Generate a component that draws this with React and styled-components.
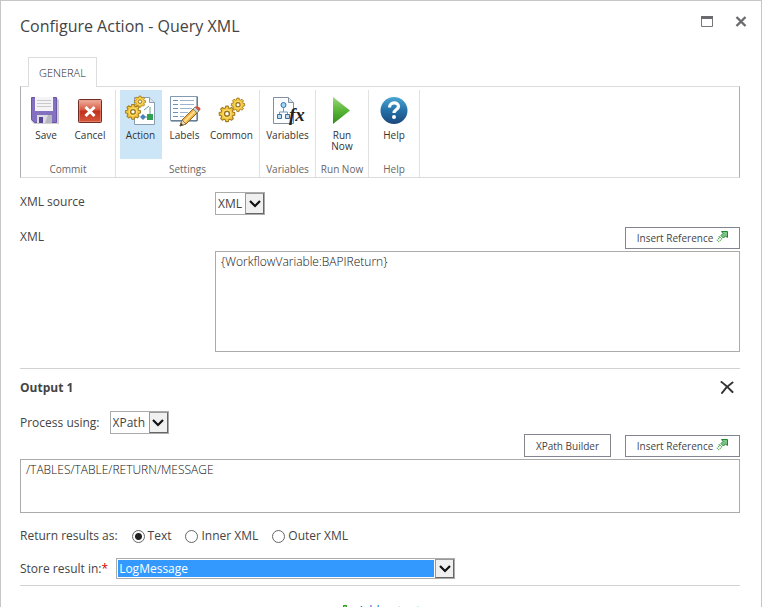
import React from 'react';
import styled, { createGlobalStyle, css } from 'styled-components';

const GlobalStyle = createGlobalStyle`
  *, *::before, *::after { box-sizing: border-box; }
  body {
    margin: 0;
    background: #fff;
    color: #444;
    font: 12px/16px "Open Sans", "Noto Sans", sans-serif;
  }
  button, select, textarea, input { font: inherit; color: inherit; margin: 0; }
`;

const Dialog = styled.main`
  height: 100vh;
  overflow: hidden;
  padding: 0 21px 0 19px;
  border: 1px solid #c6c6c6;
  border-bottom: 0;
`;

const TitleBar = styled.header`
  display: flex;
  justify-content: space-between;
  align-items: center;
  height: 40px;
  margin: 5px 0 11px;
`;

const Title = styled.h1`
  margin: 0;
  font-size: 16px;
  line-height: 24px;
  font-weight: 400;
  color: #444;
`;

const WindowControls = styled.div`
  display: flex;
  gap: 20px;
  margin: 0 -8px 8px 0;
`;

const IconButton = styled.button`
  display: flex;
  align-items: center;
  justify-content: center;
  width: 14px;
  height: 14px;
  padding: 0;
  border: 0;
  background: none;
`;

const Tabs = styled.nav`
  display: flex;
  padding-left: 8px;
`;

const Tab = styled.button`
  height: 30px;
  margin-bottom: -1px;
  padding: 0 10px;
  border: 1px solid #dcdcdc;
  border-bottom: 0;
  background: #fff;
  font-size: 11px;
  font-weight: 300;
  color: #222;
  position: relative;
`;

const Ribbon = styled.div`
  display: flex;
  height: 92px;
  padding-top: 3px;
  border: 1px solid #dcdcdc;
  border-left-color: #aaacb4;
  border-right-color: #aaacb4;
`;

const Group = styled.section`
  display: flex;
  flex-direction: column;
  justify-content: space-between;
  width: ${(p) => p.$width}px;
  border-right: 1px solid #e1e1e1;
`;

const GroupTools = styled.div`
  display: flex;
  justify-content: center;
  gap: ${(p) => p.$gap || 0}px;
`;

const GroupName = styled.span`
  text-align: center;
  font-size: 10px;
  line-height: 16px;
  color: #666;
  white-space: nowrap;
`;

const Tool = styled.button`
  display: flex;
  flex-direction: column;
  align-items: center;
  width: ${(p) => p.$width || 44}px;
  height: 69px;
  padding: 5px 0 0;
  border: 0;
  background: ${(p) => (p.$active ? '#cde6f7' : 'none')};
  font-size: 10px;
  line-height: 11px;
  color: #333;

  svg { flex: none; margin-bottom: 3px; overflow: visible; }
`;

const Form = styled.form`
  display: block;
`;

const Field = styled.div`
  display: grid;
  grid-template-columns: 195px 1fr;
  align-items: start;
  margin-top: ${(p) => p.$top}px;
`;

const Label = styled.label`
  line-height: 20px;
`;

const Star = styled.span`
  color: #c00;
`;

const Stack = styled.div`
  display: flex;
  flex-direction: column;
  gap: 2px;
`;

const Actions = styled.div`
  display: flex;
  justify-content: flex-end;
  align-items: flex-end;
  gap: 14px;
`;

const PushButton = styled.button`
  display: flex;
  align-items: center;
  justify-content: center;
  gap: 3px;
  width: ${(p) => p.$width}px;
  height: ${(p) => p.$height || 22}px;
  padding: 0;
  border: 1px solid #82858f;
  background: #fff;
  font-size: 10px;
  color: #444;

  svg { margin-bottom: 2px; }
`;

const TextBox = styled.textarea`
  display: block;
  width: 100%;
  height: ${(p) => p.$height}px;
  padding: 2px 5px;
  border: 1px solid #ababab;
  background: #fff;
  color: #111;
  font-size: 12px;
  line-height: 16px;
  font-weight: 300;
  resize: none;
  outline: 0;
`;

const SelectFrame = styled.span`
  display: grid;
  grid-template-columns: 1fr 19px;
  width: ${(p) => p.$width}px;
  max-width: 100%;
  height: ${(p) => p.$height || 23}px;
  border: 1px solid #ababab;
  background: #fff;
`;

const NativeSelect = styled.select`
  appearance: none;
  min-width: 0;
  padding: 0 2px;
  border: 0;
  border-radius: 0;
  background: transparent;
  outline: 0;
  ${(p) => p.$selected && css`
    margin: 1px;
    padding: 0 1px;
    background: #3399ff;
    color: #fff;
    option { background: #fff; color: #444; }
  `}
`;

const SelectArrow = styled.span`
  display: flex;
  align-items: center;
  justify-content: center;
  border: 1px solid #999;
  border-right-color: #666;
  border-bottom-color: #666;
  background: #f0f0f0;
  pointer-events: none;
`;

const Divider = styled.hr`
  height: 1px;
  margin: ${(p) => p.$top}px 0 0;
  border: 0;
  background: #d2d2d2;
`;

const OutputHeader = styled.div`
  display: flex;
  justify-content: space-between;
  align-items: center;
  margin-top: 9px;
  padding-right: 6px;
`;

const OutputTitle = styled.h2`
  margin: 0;
  font-size: 12px;
  line-height: 20px;
  font-weight: 700;
`;

const InlineRow = styled.div`
  display: flex;
  align-items: center;
  gap: ${(p) => p.$gap}px;
  margin-top: ${(p) => p.$top}px;
`;

const RadioSet = styled.fieldset`
  display: flex;
  align-items: center;
  gap: 14px;
  margin: 13px 0 0;
  padding: 0;
  border: 0;
`;

const Legend = styled.legend`
  float: left;
  padding: 0;
  line-height: 20px;
`;

const RadioLabel = styled.label`
  display: flex;
  align-items: center;
  gap: 3px;
  line-height: 20px;
`;

const Radio = styled.input`
  appearance: none;
  width: 13px;
  height: 13px;
  border: 1px solid #666;
  border-radius: 50%;
  background: #fff;
  &:checked { background: radial-gradient(circle, #222 0 3px, #fff 4px); }
`;

const AddLink = styled.a`
  display: flex;
  align-items: center;
  justify-content: center;
  gap: 6px;
  margin-top: 15px;
  line-height: 20px;
  color: #0072c6;
  text-decoration: none;
`;

const GEAR = 'M-1.5-8h3l.5 2.2 1.5.6L5.4-6.4l2 2-1.2 1.9.6 1.5L9-.5v3l-2.2.5-.6 1.5 1.2 1.9-2 2-1.9-1.2-1.5.6L1.5 10h-3L-2 7.8l-1.5-.6-1.9 1.2-2-2 1.2-1.9L-6.8 3-9 2.5v-3l2.2-.5.6-1.5-1.2-1.9 2-2 1.9 1.2 1.5-.6z';

function Gear({ x, y, scale }) {
  return (
    <g transform={`translate(${x} ${y}) scale(${scale})`}>
      <path d={GEAR} fill="#f5c83c" stroke="#a57d22" strokeWidth="1.3" strokeLinejoin="round" />
      <circle cy="1" r="4.6" fill="none" stroke="#ffe083" strokeWidth="1" />
      <circle cy="1" r="2.8" fill="#fff" stroke="#94701c" strokeWidth="1.5" />
    </g>
  );
}

function Icon({ children }) {
  return <svg width="32" height="32" viewBox="0 0 32 32" aria-hidden="true">{children}</svg>;
}

const SaveIcon = () => (
  <Icon>
    <path d="M1 3h26l2 2v24H4l-3-3z" fill="#bbb" opacity=".7" />
    <path d="M1.5 2.500h25v25h-22l-3-3z" fill="#8470c0" stroke="#6d55ac" />
    <path d="M5 2h18v14H5z" fill="#f4f4f6" />
    <path d="M7 5.500h14M7 8.500h14M7 11.500h14" stroke="#c9c9cc" />
    <path d="M7 20h15v8H7z" fill="#dcdce2" />
    <path d="M9 22h4v6H9z" fill="#5b4596" />
    <path d="M18 20h4v8h-7z" fill="#b7b7c2" />
  </Icon>
);

const CancelIcon = () => (
  <Icon>
    <defs>
      <linearGradient id="cancelFill" x1="0" y1="0" x2="0" y2="1">
        <stop offset="0" stopColor="#efb5a4" />
        <stop offset=".45" stopColor="#d8583f" />
        <stop offset=".5" stopColor="#bf2f1c" />
        <stop offset="1" stopColor="#d9593f" />
      </linearGradient>
    </defs>
    <rect x="4.5" y="4.500" width="23" height="23" rx="1" fill="url(#cancelFill)" stroke="#702d25" />
    <rect x="5.500" y="5.500" width="21" height="21" fill="none" stroke="#e99885" opacity=".6" />
    <path d="M11.500 12l9 9M20.500 12l-9 9" stroke="#fff" strokeWidth="3" />
  </Icon>
);

const ActionIcon = () => (
  <Icon>
    <path d="M9.500 2.500h15l5 5v22h-20z" fill="#fff" stroke="#8b9db0" />
    <path d="M24.500 2.500v5h5" fill="#dde6ee" stroke="#8b9db0" />
    <path d="M17 22h6M25 12v8M19 15l5-4" stroke="#6f9d92" fill="none" />
    <path d="M22 19h6v6h-6z" fill="#31a052" />
    <path d="M15 22l3-3 3 3-3 3z" fill="#4a84bb" />
    <Gear x={15} y={6} scale={0.62} />
    <Gear x={8} y={16} scale={0.82} />
  </Icon>
);

const LabelsIcon = () => (
  <Icon>
    <path d="M1.500 1.500h27v24h-27z" fill="#fff" stroke="#839bb2" />
    <path d="M28 2v24H2" fill="none" stroke="#476480" />
    <path d="M4 5.500h5M4 9.500h5M4 13.500h5M4 17.500h5M4 21.500h5" stroke="#6d91b6" />
    <path d="M11 5.500h14M11 9.500h14M11 13.500h12M11 17.500h8M11 21.500h4" stroke="#9bb3cc" />
    <path d="M13 25L25 13l4 4-12 12-6 2z" fill="#efb344" stroke="#94631d" />
    <path d="M15 27l12-12" stroke="#ffdf8b" strokeWidth="2" />
    <path d="M13 25l4 4-6 2z" fill="#edd6ae" stroke="#75634b" strokeWidth=".7" />
    <path d="M11 31l1-3 2 2z" fill="#333" />
    <path d="M24 14l4 4 2-2-4-4z" fill="#c9d4cf" stroke="#7e8d88" />
    <path d="M26 12l4 4c2-1 2-3 0-4s-3-1-4 0z" fill="#d25343" />
  </Icon>
);

const CommonIcon = () => (
  <Icon>
    <Gear x={22} y={9} scale={0.74} />
    <Gear x={11} y={18} scale={0.86} />
  </Icon>
);

const VariablesIcon = () => (
  <Icon>
    <path d="M1.500 2.500h15l5 5v21h-20z" fill="#fbfdff" stroke="#8291a0" />
    <path d="M16.500 2.500v5h5" fill="#dae4ec" stroke="#8291a0" />
    <path d="M11.500 13v4M7.500 19v-2h8v2" fill="none" stroke="#7599b6" />
    <circle cx="11.500" cy="10" r="2.500" fill="#a7d5f4" stroke="#2e74a8" />
    <path d="M5.500 19.500h4v4h-4zM13.500 19.500h4v4h-4z" fill="#b9dcf2" stroke="#386f9c" />
    <text x="17" y="26" fontFamily="Liberation Serif, serif" fontSize="19" fontWeight="700" fontStyle="italic" fill="#222">fx</text>
  </Icon>
);

const RunIcon = () => (
  <Icon>
    <defs>
      <linearGradient id="runFill" x1="0" y1="0" x2="0" y2="1">
        <stop stopColor="#9bd778" />
        <stop offset=".55" stopColor="#53b332" />
        <stop offset="1" stopColor="#328c20" />
      </linearGradient>
    </defs>
    <path d="M7 2l17 13.500L7 29z" fill="url(#runFill)" />
  </Icon>
);

const HelpIcon = () => (
  <Icon>
    <defs>
      <linearGradient id="helpFill" x1="0" y1="0" x2="0" y2="1">
        <stop stopColor="#4aa6d4" />
        <stop offset=".5" stopColor="#2471a8" />
        <stop offset="1" stopColor="#1c477c" />
      </linearGradient>
    </defs>
    <circle cx="16" cy="15.500" r="13.500" fill="url(#helpFill)" />
    <path d="M11.500 12.500c0-6 9-6 9-1 0 3-4.500 3-4.500 6.500" fill="none" stroke="#fff" strokeWidth="3.200" />
    <circle cx="16" cy="22" r="2" fill="#fff" />
  </Icon>
);

const ReferenceIcon = () => (
  <svg width="12" height="12" viewBox="0 0 12 12" aria-hidden="true">
    <path d="M5.500.5h6v6l-2-1.500-2 2-2.500-2.500 2-2z" fill="#7cc487" stroke="#24862b" />
    <path d="M6 7.500l-4 4M4.500 6l-4 4M3.500 5.500L2 7" stroke="#2f9a37" strokeDasharray="1 1" strokeWidth="1.200" />
  </svg>
);

const MaximizeIcon = () => (
  <svg width="12" height="12" viewBox="0 0 12 12" aria-hidden="true">
    <path d="M.5.5h11v10H.5z" fill="#fff" stroke="#777" />
    <path d="M0 0h12v3H0z" fill="#6b6b6f" />
  </svg>
);

const CloseIcon = () => (
  <svg width="12" height="12" viewBox="0 0 12 12" aria-hidden="true">
    <path d="M1.500 1l9 9M10.500 1l-9 9" stroke="#6b6b6f" strokeWidth="2.400" />
  </svg>
);

const RemoveIcon = () => (
  <svg width="14" height="14" viewBox="0 0 14 14" aria-hidden="true">
    <path d="M1.500 1c3 2 7 6 11 10M12.500 1.500C8 4.500 5 7.500 2 12" fill="none" stroke="#333" strokeWidth="2" strokeLinecap="round" />
  </svg>
);

const PlusIcon = () => (
  <svg width="12" height="12" viewBox="0 0 12 12" aria-hidden="true">
    <path d="M4.500.5h3v4h4v3h-4v4h-3v-4h-4v-3h4z" fill="#8ad568" stroke="#25961d" />
  </svg>
);

function Select({ id, options, width, height, selected }) {
  return (
    <SelectFrame $width={width} $height={height}>
      <NativeSelect id={id} $selected={selected} defaultValue={options[0]}>
        {options.map((option) => <option key={option}>{option}</option>)}
      </NativeSelect>
      <SelectArrow>
        <svg width="12" height="8" viewBox="0 0 12 8" aria-hidden="true">
          <path d="M1 1l5 5 5-5" fill="none" stroke="#111" strokeWidth="2.200" />
        </svg>
      </SelectArrow>
    </SelectFrame>
  );
}

function InsertReference() {
  return (
    <PushButton type="button" $width={115}>
      Insert Reference <ReferenceIcon />
    </PushButton>
  );
}

const GROUPS = [
  { name: 'Commit', width: 95, tools: [
    { label: 'Save', icon: SaveIcon }, { label: 'Cancel', icon: CancelIcon },
  ] },
  { name: 'Settings', width: 144, gap: 1, tools: [
    { label: 'Action', icon: ActionIcon, active: true, width: 42 },
    { label: 'Labels', icon: LabelsIcon },
    { label: 'Common', icon: CommonIcon, width: 48 },
  ] },
  { name: 'Variables', width: 56, tools: [{ label: 'Variables', icon: VariablesIcon, width: 48 }] },
  { name: 'Run Now', width: 53, tools: [{ label: <>Run<br />Now</>, icon: RunIcon }] },
  { name: 'Help', width: 51, tools: [{ label: 'Help', icon: HelpIcon }] },
];

export default function App() {
  return (
    <>
      <GlobalStyle />
      <Dialog>
        <TitleBar>
          <Title>Configure Action - Query XML</Title>
          <WindowControls>
            <IconButton aria-label="Maximize"><MaximizeIcon /></IconButton>
            <IconButton aria-label="Close"><CloseIcon /></IconButton>
          </WindowControls>
        </TitleBar>

        <Tabs><Tab>GENERAL</Tab></Tabs>
        <Ribbon>
          {GROUPS.map((group) => (
            <Group key={group.name} $width={group.width}>
              <GroupTools $gap={group.gap}>
                {group.tools.map(({ label, icon: ToolIcon, active, width }, index) => (
                  <Tool key={index} $active={active} $width={width}>
                    <ToolIcon />
                    <span>{label}</span>
                  </Tool>
                ))}
              </GroupTools>
              <GroupName>{group.name}</GroupName>
            </Group>
          ))}
        </Ribbon>

        <Form>
          <Field $top={14}>
            <Label htmlFor="source">XML source</Label>
            <Select id="source" options={['XML', 'URL']} width={50} />
          </Field>
          <Field $top={12}>
            <Label htmlFor="xml">XML</Label>
            <Stack>
              <Actions><InsertReference /></Actions>
              <TextBox id="xml" $height={101} spellCheck={false} defaultValue="{WorkflowVariable:BAPIReturn}" />
            </Stack>
          </Field>

          <Divider $top={16} />
          <OutputHeader>
            <OutputTitle>Output 1</OutputTitle>
            <IconButton type="button" aria-label="Remove output"><RemoveIcon /></IconButton>
          </OutputHeader>
          <InlineRow $gap={10} $top={13}>
            <Label htmlFor="process">Process using:</Label>
            <Select id="process" options={['XPath', 'XSLT']} width={59} />
          </InlineRow>
          <Stack>
            <Actions>
              <PushButton type="button" $width={87} $height={23}>XPath Builder</PushButton>
              <InsertReference />
            </Actions>
            <TextBox aria-label="XPath" $height={54} spellCheck={false} defaultValue="/TABLES/TABLE/RETURN/MESSAGE" />
          </Stack>

          <RadioSet>
            <Legend>Return results as:</Legend>
            {['Text', 'Inner XML', 'Outer XML'].map((name, index) => (
              <RadioLabel key={name}>
                <Radio type="radio" name="format" defaultChecked={index === 0} />
                {name}
              </RadioLabel>
            ))}
          </RadioSet>
          <InlineRow $gap={8} $top={12}>
            <Label htmlFor="store">Store result in:<Star>*</Star></Label>
            <Select id="store" options={['LogMessage']} width={339} height={21} selected />
          </InlineRow>
          <Divider $top={6} />
          <AddLink href="#add"><PlusIcon />Add output</AddLink>
        </Form>
      </Dialog>
    </>
  );
}
